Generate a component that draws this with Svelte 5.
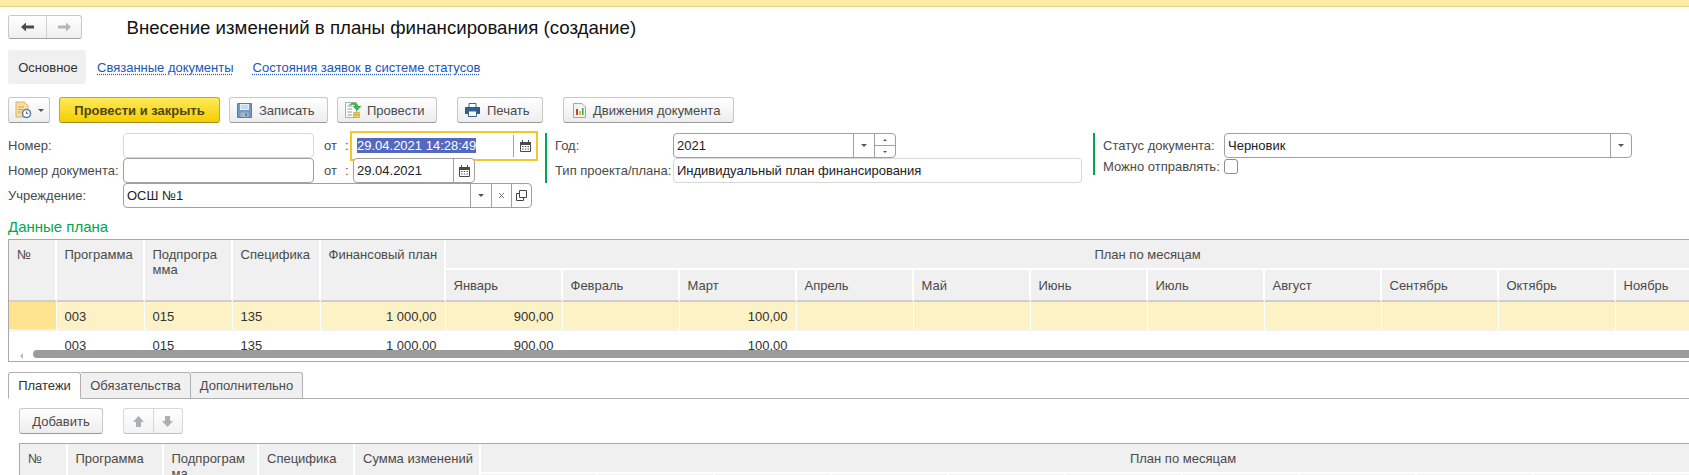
<script>
  const months1 = ['Январь','Февраль','Март','Апрель','Май','Июнь','Июль','Август','Сентябрь','Октябрь','Ноябрь','Декабрь'];
  const row = ['900,00','','100,00','','','','','','','','',''];
</script>

{#snippet calendar()}
  <svg width="11" height="12" viewBox="0 0 11 12"><path d="M.5 2.500H10.500V11.500H.5Z" fill="#fff" stroke="#4a4a4a"/><path d="M0 2H11V5H0Z" fill="#4a4a4a"/><path d="M2.500 0V2M8.500 0V2" stroke="#4a4a4a"/><path d="M2 6.500H3.500M4.750 6.500H6.250M7.500 6.500H9M2 9H3.500M4.750 9H6.250M7.500 9H9" stroke="#555"/></svg>
{/snippet}

<div class="page">
  <div class="topbar"></div>

  <header class="head">
    <div class="nav">
      <span class="navb"><svg width="14" height="10" viewBox="0 0 14 10"><path d="M0 5 5 .5V3.500H13V6.500H5V9.500Z" fill="#4a4a4a"/></svg></span>
      <span class="navb"><svg width="14" height="10" viewBox="0 0 14 10"><path d="M14 5 9 .5V3.500H1V6.500H9V9.500Z" fill="#b5b5b5"/></svg></span>
    </div>
    <h1>Внесение изменений в планы финансирования (создание)</h1>
  </header>

  <nav class="tabs">
    <span class="tab-active">Основное</span>
    <a class="lnk l1" href="#a">Связанные документы</a>
    <a class="lnk" href="#b">Состояния заявок в системе статусов</a>
  </nav>

  <div class="toolbar">
    <button class="btn b-menu">
      <svg width="17" height="18" viewBox="0 0 17 18"><path d="M1 1H9L13 5V16H1Z" fill="#f8dfa2" stroke="#d9b268"/><path d="M3 6H9M3 8.500H8M3 11H6" stroke="#c9a55f"/><circle cx="11.500" cy="12.500" r="4" fill="#fff" stroke="#4f86c6" stroke-width="1.600"/><path d="M11.500 10.500V12.500H13" stroke="#c0392b" fill="none"/></svg>
      <i class="caret"></i>
    </button>
    <button class="btn primary">Провести и закрыть</button>
    <button class="btn b-save">
      <svg width="15" height="15" viewBox="0 0 15 15"><path d="M.5.5H14.500V14.500H.5Z" fill="#6f9bc9" stroke="#4f7fb0"/><path d="M3 1H12V7H3Z" fill="#e6eff8"/><path d="M4 3H11M4 5H11" stroke="#a9c3dc"/><path d="M3.500 9.500H11.500V14H3.500Z" fill="#aab4bd"/><path d="M8.500 10.500H10V13H8.500Z" fill="#5a6b7a"/></svg>
      Записать
    </button>
    <button class="btn b-post">
      <svg width="17" height="18" viewBox="0 0 17 18"><path d="M.5 1.500H11.500V16.500H.5Z" fill="#fff" stroke="#a7adb3"/><path d="M2.500 5H7M2.500 8H7M2.500 11H7M2.500 14H7" stroke="#8f98a1"/><path d="M4 4.500C5 1 12 .5 13.500 5H16.500L12 10 7.500 5H10C9 3.500 6.500 3.500 4 4.500Z" fill="#3fb24a"/><path d="M8.500 11.500H14.500V13.500H8.500ZM8.500 14H14.500V16.500H8.500Z" fill="#efd14f" stroke="#c9a93a" stroke-width=".7"/></svg>
      Провести
    </button>
    <button class="btn b-print">
      <svg width="15" height="14" viewBox="0 0 15 14"><path d="M4 .5H11V5H4Z" fill="#fff" stroke="#3f668c"/><path d="M.5 4.500H14.500V10.500H.5Z" fill="#33618f" stroke="#2c5680"/><path d="M3.500 8H11.500V13.500H3.500Z" fill="#fff" stroke="#3f668c"/></svg>
      Печать
    </button>
    <button class="btn b-move">
      <svg width="13" height="15" viewBox="0 0 13 15"><path d="M.5.5H9L12.500 4V14.500H.5Z" fill="#f4f4ef" stroke="#a2a89c"/><path d="M3 6H5V12H3Z" fill="#d33b2c"/><path d="M6 8H8V12H6Z" fill="#e9b52f"/><path d="M9 5H10.500V12H9Z" fill="#3fa04a"/></svg>
      Движения документа
    </button>
  </div>

  <section class="form">
    <div class="col1">
      <div class="row">
        <span class="lab w115">Номер:</span>
        <span class="field soft w191"></span>
        <span class="lab ot">от</span><span class="lab colon">:</span>
        <span class="field focus">
          <span class="val"><span class="sel">29.04.2021 14:28:49</span></span>
          <span class="c-focus">{@render calendar()}</span>
        </span>
      </div>
      <div class="row">
        <span class="lab w115">Номер документа:</span>
        <span class="field w191"></span>
        <span class="lab ot">от</span><span class="lab colon">:</span>
        <span class="field date2">
          <span class="val">29.04.2021</span>
          <span class="cell c-cal">{@render calendar()}</span>
        </span>
      </div>
      <div class="row">
        <span class="lab w115">Учреждение:</span>
        <span class="field w409">
          <span class="val">ОСШ №1</span>
          <span class="cell c21"><i class="caret"></i></span>
          <span class="cell c20"><svg width="7" height="7" viewBox="0 0 7 7"><path d="M1 1 6 6M6 1 1 6" stroke="#777"/></svg></span>
          <span class="cell c20"><svg width="11" height="11" viewBox="0 0 11 11"><path d="M3.500 .5H10.500V7.500H3.500ZM3.500 3.500H.5V10.500H7.500V7.500" fill="none" stroke="#444"/></svg></span>
        </span>
      </div>
    </div>

    <div class="col2">
      <div class="row">
        <span class="lab w118">Год:</span>
        <span class="field year">
          <span class="val">2021</span>
          <span class="cell c21"><i class="caret"></i></span>
          <span class="cell spin"><span><i class="up"></i></span><span><i class="caret sm"></i></span></span>
        </span>
      </div>
      <div class="row">
        <span class="lab w118">Тип проекта/плана:</span>
        <span class="field soft w409"><span class="val">Индивидуальный план финансирования</span></span>
      </div>
    </div>

    <div class="col3">
      <div class="row">
        <span class="lab w121">Статус документа:</span>
        <span class="field status">
          <span class="val">Черновик</span>
          <span class="cell c21"><i class="caret"></i></span>
        </span>
      </div>
      <div class="row r-check">
        <span class="lab w121">Можно отправлять:</span>
        <span class="check"></span>
      </div>
    </div>
  </section>

  <h2>Данные плана</h2>

  <div class="grid-box t1">
    <div class="gridclip">
      <div class="ghead">
        <div class="hc">№</div>
        <div class="hc">Программа</div>
        <div class="hc">Подпрограмма</div>
        <div class="hc">Специфика</div>
        <div class="hc nw">Финансовый план</div>
        <div class="months">
          <div class="mtitle">План по месяцам</div>
          <div class="mrow">
            {#each months1 as m}<div class="mc">{m}</div>{/each}
          </div>
        </div>
      </div>
      {#each [0, 1] as r}
        <div class="drow" class:cur={r === 0}>
          <div class="dc first"></div>
          <div class="dc">003</div>
          <div class="dc">015</div>
          <div class="dc">135</div>
          <div class="dc num">1 000,00</div>
          {#each row as v}<div class="dc num m">{v}</div>{/each}
        </div>
      {/each}
    </div>
    <div class="hscroll">
      <i class="left"></i>
      <div class="thumb"></div>
    </div>
  </div>

  <div class="lower">
    <div class="ltabs">
      <span class="lt active">Платежи</span>
      <span class="lt t2">Обязательства</span>
      <span class="lt t3">Дополнительно</span>
    </div>
    <div class="panel">
      <div class="ptools">
        <button class="btn add">Добавить</button>
        <div class="arrows">
          <span><svg width="13" height="13" viewBox="0 0 13 13"><path d="M6.500 1 12 7H9V12H4V7H1Z" fill="#a9b0b6"/></svg></span>
          <span><svg width="13" height="13" viewBox="0 0 13 13"><path d="M6.500 12 12 6H9V1H4V6H1Z" fill="#a9b0b6"/></svg></span>
        </div>
      </div>
      <div class="g2">
        <div class="hc">№</div>
        <div class="hc">Программа</div>
        <div class="hc">Подпрограмма</div>
        <div class="hc">Специфика</div>
        <div class="hc nw">Сумма изменений</div>
        <div class="months">
          <div class="mtitle">План по месяцам</div>
          <div class="mrow">
            {#each months1 as m}<div class="mc">{m}</div>{/each}
          </div>
        </div>
      </div>
    </div>
  </div>
</div>

<style>
  :global(body) { margin: 0; background: #fff; overflow: hidden; }
  .page { width: 1689px; height: 475px; overflow: hidden; font: 13px/15px "Liberation Sans", Arial, sans-serif; color: #4a4a4a; background: #fff; }
  .topbar { height: 6px; background: #fdeba6; border-bottom: 1px solid #e2cf80; }

  .head { display: flex; align-items: center; padding: 8px 0 0 8px; height: 24px; }
  .nav { display: flex; width: 74px; height: 24px; border: 1px solid #c8c8c8; border-bottom-color: #a0a0a0; border-radius: 3px; box-sizing: border-box; background: linear-gradient(#fff, #efefef); }
  .navb { display: flex; align-items: center; justify-content: center; }
  .navb:first-child { width: 37px; border-right: 1px solid #d0d0d0; }
  .navb:last-child { flex: 1; }
  h1 { margin: 2px 0 0 44.500px; font: 400 18.670px/24px "Liberation Sans", Arial, sans-serif; color: #111; white-space: nowrap; }

  .tabs { display: flex; align-items: center; margin: 11px 0 0 8px; height: 34px; }
  .tab-active { display: flex; align-items: center; justify-content: center; box-sizing: border-box; padding-left: 2px; width: 78px; height: 34px; border-radius: 3px; background: #f0f0f0; color: #333; }
  .lnk { color: #1a56b8; text-decoration: underline dotted #2a5fb5; text-underline-offset: 2px; white-space: nowrap; }
  .l1 { margin: 0 19px 0 11px; }

  .toolbar { display: flex; margin: 13px 0 0 8px; height: 26px; }
  .btn { display: inline-flex; align-items: center; justify-content: center; gap: 6px; box-sizing: border-box; height: 26px; padding: 0; border: 1px solid #c8c8c8; border-bottom-color: #9a9a9a; border-radius: 3px; background: linear-gradient(#fff, #ededed); font: 13px/15px "Liberation Sans", Arial, sans-serif; color: #4a4a4a; white-space: nowrap; }
  .b-menu { width: 42px; margin-right: 9px; }
  .primary { width: 161px; margin-right: 9px; font-weight: 700; color: #4f4416; background: linear-gradient(#ffe95a, #f3cf00); border-color: #c4a72a; border-bottom-color: #a48c20; }
  .b-save { width: 99px; margin-right: 9px; justify-content: flex-start; padding-left: 7px; gap: 7px; }
  .b-post { width: 100px; margin-right: 20px; justify-content: flex-start; padding-left: 7px; gap: 5px; }
  .b-print { width: 86px; margin-right: 20px; justify-content: flex-start; padding-left: 7px; gap: 7px; }
  .b-move { width: 171px; justify-content: flex-start; padding-left: 9px; gap: 7px; }
  .caret { display: inline-block; width: 0; height: 0; border: 3px solid transparent; border-top: 3px solid #555; border-bottom: 0; }
  .caret.sm { border-width: 2px 2px 0; }
  .up { display: inline-block; width: 0; height: 0; border: 2px solid transparent; border-bottom: 2px solid #555; border-top: 0; }

  .form { display: flex; align-items: flex-start; margin: 10px 0 0 8px; }
  .row { display: flex; align-items: center; height: 25px; }
  .lab { display: block; white-space: nowrap; }
  .w115 { width: 115px; }
  .w118 { width: 118px; }
  .w121 { width: 121px; }
  .w191 { width: 191px; }
  .w409 { width: 409px; }
  .ot { width: 21px; margin-left: 10px; }
  .colon { width: 7px; }
  .field { display: flex; align-items: stretch; box-sizing: border-box; height: 25px; border: 1px solid #a0a0a0; border-radius: 4px; background: #fff; color: #222; }
  .soft { border-color: #d8d8d8; }
  .val { flex: 1; display: flex; align-items: center; padding-left: 3px; white-space: nowrap; overflow: hidden; }
  .cell { display: flex; flex-direction: column; align-items: center; justify-content: center; border-left: 1px solid #a0a0a0; box-sizing: border-box; }
  .c-cal { width: 21px; }
  .c21 { width: 21px; }
  .c20 { width: 20px; }
  .focus { width: 184px; border: 0; border-radius: 0; outline: 2px solid #f6c528; height: 26px; }
  .focus .val { padding-left: 5px; }
  .c-focus { display: flex; align-items: center; justify-content: center; box-sizing: border-box; width: 23px; border-left: 1px solid #a0a0a0; margin: 2px 0; }
  .sel { background: #5468c0; color: #fff; line-height: 15px; }
  .date2 { width: 122px; margin-left: 1px; }
  .col2 { margin-left: 9px; border-left: 2px solid #00a650; padding-left: 8px; height: 50px; }
  .year { width: 223px; }
  .spin { width: 21px; }
  .spin span { flex: 1; width: 100%; display: flex; align-items: center; justify-content: center; }
  .spin span + span { border-top: 1px solid #a0a0a0; }
  .col3 { margin-left: 11px; border-left: 2px solid #00a650; padding-left: 8px; height: 42px; }
  .status { width: 408px; }
  .r-check { height: 17px; }
  .check { box-sizing: border-box; width: 14px; height: 15px; border: 1px solid #8c8c8c; border-radius: 3px; background: #fff; }

  h2 { margin: 10px 0 0 8px; font: 400 15px/18px "Liberation Sans", Arial, sans-serif; color: #00a650; }

  .grid-box { margin: 3px 0 0 8px; border: 1px solid #a8a8a8; border-right: 0; box-sizing: border-box; height: 123px; width: 1681px; overflow: hidden; }
  .gridclip { height: 110px; overflow: hidden; }
  .ghead, .drow { display: grid; width: max-content; grid-template-columns: 47.500px 88px 88px 88px 125px repeat(12, 117px); }
  .ghead { height: 62px; }
  .hc { box-sizing: border-box; padding: 7px 6px 0 8px; background: #f0f0f0; border-right: 2px solid #fff; border-bottom: 2px solid #cfcfcf; overflow: hidden; overflow-wrap: anywhere; }
  .nw { white-space: nowrap; padding-right: 0; }
  .months { grid-column: span 12; display: grid; grid-template-rows: 30px 32px; }
  .mtitle { box-sizing: border-box; background: #f0f0f0; border-bottom: 2px solid #fff; text-align: center; padding-top: 7px; }
  .mrow { display: grid; grid-template-columns: repeat(12, 117px); }
  .mc { box-sizing: border-box; background: #f0f0f0; border-right: 2px solid #fff; border-bottom: 2px solid #cfcfcf; padding: 8px 0 0 8px; }
  .drow { height: 29px; }
  .dc { box-sizing: border-box; padding: 7px 8px 0 8px; height: 29px; color: #333; border-right: 1px solid #fff; border-bottom: 2px solid #f2f2f2; }
  .cur .dc { background: #fdf1c6; }
  .cur .first { background: #fde28f; }
  .num { text-align: right; }
  .hscroll { display: flex; align-items: center; height: 11px; }
  .left { width: 0; height: 0; margin-left: 11px; border: 3px solid transparent; border-right: 3px solid #bbb; border-left: 0; }
  .thumb { margin-left: 10px; flex: 1; height: 8px; margin-top: -3px; border-radius: 4px 0 0 4px; background: #9b9b9b; }

  .lower { margin: 10px 0 0 8px; }
  .ltabs { display: flex; height: 27px; position: relative; z-index: 1; }
  .lt { box-sizing: border-box; display: flex; align-items: center; justify-content: center; height: 27px; border: 1px solid #b0b0b0; border-left: 0; border-radius: 0 3px 0 0; background: #f0f0f0; }
  .active { width: 73px; background: #fff; border-left: 1px solid #b0b0b0; border-bottom-color: #fff; border-radius: 3px 3px 0 0; color: #333; }
  .t2 { width: 110px; }
  .t3 { width: 112px; }
  .panel { border-top: 1px solid #b0b0b0; margin-top: -1px; padding: 9px 0 0 11px; box-sizing: border-box; }
  .ptools { display: flex; height: 26px; }
  .add { width: 84px; margin-right: 20px; }
  .arrows { display: flex; box-sizing: border-box; width: 60px; height: 26px; border: 1px solid #d8d8d8; border-bottom-color: #c0c0c0; border-radius: 3px; background: linear-gradient(#fff, #f2f2f2); }
  .arrows span { flex: 1; display: flex; align-items: center; justify-content: center; }
  .arrows span + span { border-left: 1px solid #d8d8d8; }
  .g2 { display: grid; width: max-content; margin-top: 9px; border-top: 1px solid #a8a8a8; border-left: 1px solid #a8a8a8; grid-template-columns: 47.500px 96px 95.500px 96px 126px repeat(12, 117px); }
</style>
